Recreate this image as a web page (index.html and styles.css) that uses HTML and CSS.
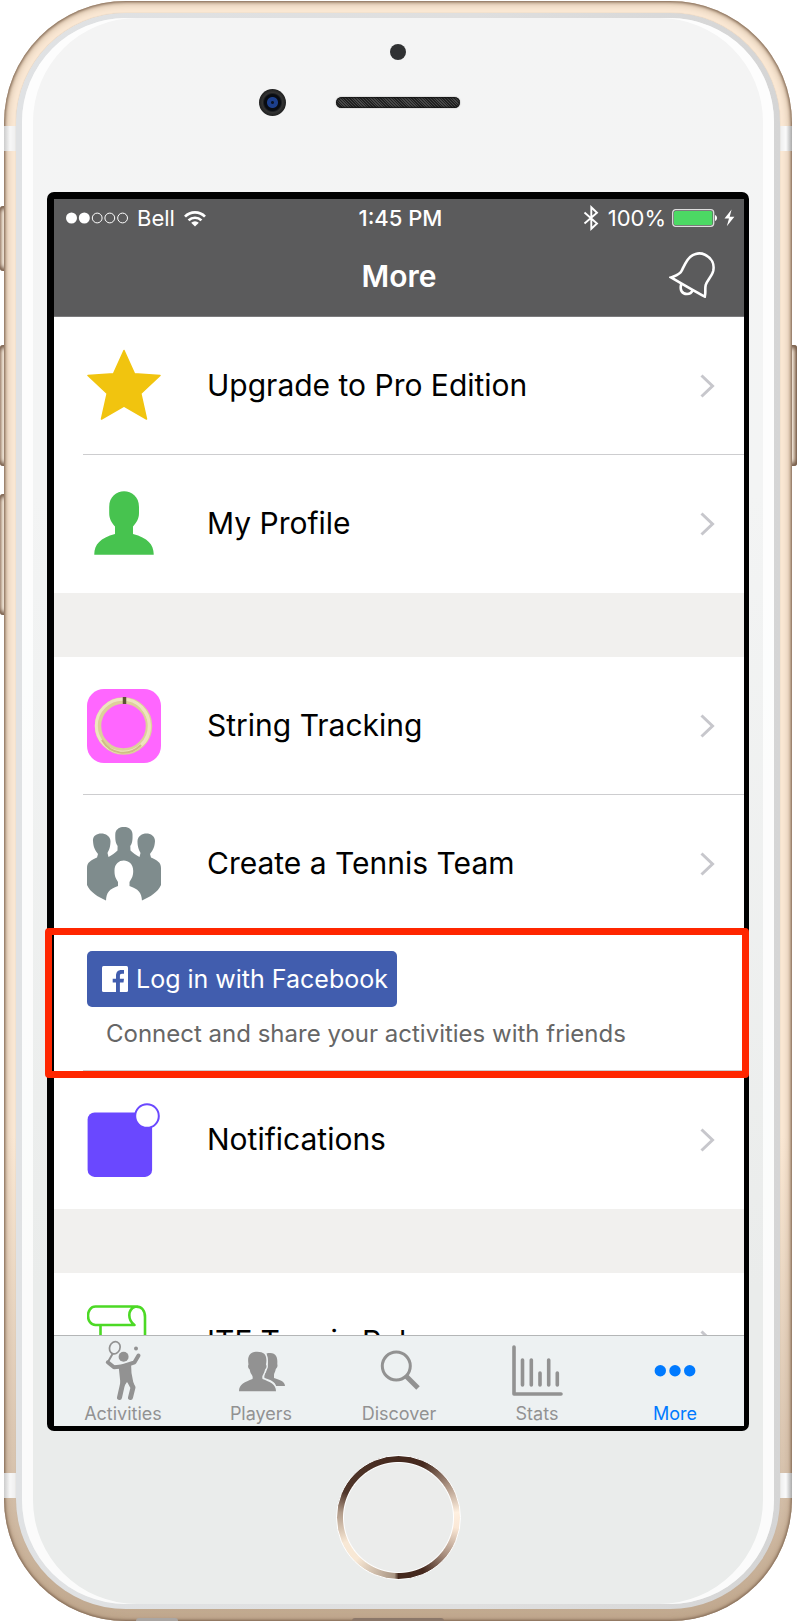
FILE: index.html
```html
<!DOCTYPE html>
<html lang="en">
<head>
<meta charset="utf-8">
<meta name="viewport" content="width=device-width, initial-scale=1">
<title>More</title>
<link rel="stylesheet" href="styles.css">
</head>
<body>
<div class="device">
  <span class="key key-mute"></span>
  <span class="key key-up"></span>
  <span class="key key-down"></span>
  <span class="key key-power"></span>
  <div class="frame">
    <span class="band band-top"></span>
    <span class="band band-bottom"></span>
    <span class="port port-jack"></span>
    <span class="port port-dock"></span>
    <div class="rim">
      <div class="face">
        <div class="sensors">
          <span class="proximity"></span>
          <span class="camera"></span>
          <span class="speaker"></span>
        </div>
        <div class="screen">
          <header class="top">
            <div class="status">
              <div class="status-left">
                <svg width="62" height="12" viewBox="0 0 62 12"><g fill="#fff"><circle cx="5.5" cy="6" r="5.5"/><circle cx="18.3" cy="6" r="5.5"/></g><g fill="none" stroke="#fff"><circle cx="31.2" cy="6" r="4.9"/><circle cx="43.8" cy="6" r="4.9"/><circle cx="56.6" cy="6" r="4.9"/></g></svg>
                <span>Bell</span>
                <svg width="22" height="17" viewBox="0 0 22 17"><g fill="none" stroke="#fff" stroke-width="2.7"><path d="M1 6.6A14 14 0 0 1 21 6.6"/><path d="M4.6 10.4A9 9 0 0 1 17.4 10.4"/></g><path d="M11 16.6L7.2 12.7A5.4 5.4 0 0 1 14.8 12.7Z" fill="#fff"/></svg>
              </div>
              <span class="clock">1:45 PM</span>
              <div class="status-right">
                <svg class="bluetooth" width="16" height="26" viewBox="0 0 16 26"><path d="M1.5 7.5L14 18.5L8.3 23.8V2.2L14 7.7L1.5 18.5" fill="none" stroke="#fff" stroke-width="1.9"/></svg>
                <span>100%</span>
                <svg width="46" height="18" viewBox="0 0 46 18"><rect x=".7" y=".7" width="41" height="16.6" rx="3" fill="none" stroke="#ddd" stroke-width="1.3"/><rect x="2" y="2" width="38.4" height="14" rx="1.5" fill="#4cd964"/><path d="M43 6C45.7 6.7 45.7 11.3 43 12Z" fill="#fff"/></svg>
                <svg width="11" height="18" viewBox="0 0 11 18"><path d="M7.6 .5L.5 9.6H5L2.8 17.3L10.4 7.7H5.7Z" fill="#fff"/></svg>
              </div>
            </div>
            <div class="nav">
              <h1>More</h1>
              <button class="bell" type="button" aria-label="Alerts">
                <svg width="46" height="48" viewBox="669 250 46 48"><g fill="none" stroke="#fff" stroke-width="2.6"><path d="M671 277.4C676 275.5 680 274.500 681.500 271C683.500 267 685 263.500 687.500 260C692 253.500 699 252 705 254.700C712 258 714.600 264.500 713.200 271C711.800 276.500 706.500 281 705.700 285C704.700 289.500 706 292 704.800 296.600Q694 291 671 277.400Z"/><path d="M681.200 284C679.500 290 682 294 687 294C689.800 294 691.700 292.600 692.600 290.300"/></g></svg>
              </button>
            </div>
          </header>
          <main class="list">
            <ul class="group">
              <li><a class="row" href="#pro">
                <svg class="icon" viewBox="87 348 74 74"><path d="M124 349.500L134.500 372.800L160 374.500L140.800 392.500L146.500 418L124 405L101.500 418L107.200 392.500L88 374.500L113.500 372.800Z" fill="#f1c40f" stroke="#f1c40f" stroke-width="1.500" stroke-linejoin="round"/></svg>
                <span class="label">Upgrade to Pro Edition</span>
                <svg class="chevron" viewBox="0 0 15 24"><path d="M1.500 1.500L12.500 12L1.500 22.500"/></svg>
              </a></li>
              <li><a class="row" href="#profile">
                <svg class="icon" viewBox="87 487 74 74"><path d="M94.300 554.700C94 545 100 538 115 534V526.500C111.500 522.500 109.200 519 109.200 513V507C109.200 486 139 486 139 507V513C139 519 136.500 522.500 133 526.500V534C148 538 154 545 153.700 554.700Z" fill="#47c34f"/></svg>
                <span class="label">My Profile</span>
                <svg class="chevron" viewBox="0 0 15 24"><path d="M1.500 1.500L12.500 12L1.500 22.500"/></svg>
              </a></li>
            </ul>
            <ul class="group">
              <li><a class="row" href="#strings">
                <svg class="icon" viewBox="0 0 74 74"><rect width="74" height="74" rx="17" fill="#ff66ff"/><g fill="none"><circle cx="36.500" cy="37" r="25.500" stroke="#ddd09b" stroke-width="6.500"/><circle cx="35.800" cy="36.800" r="26.500" stroke="#eee5c0" stroke-width="3"/><path d="M54 18C66 32 65 49 54 57" stroke="#efe2bd" stroke-width="2"/><path d="M15 51C24 66 42 68 54 56" stroke="#cfbf84" stroke-width="2"/><path d="M37.500 8V15" stroke="#5d5133" stroke-width="3.500"/></g></svg>
                <span class="label">String Tracking</span>
                <svg class="chevron" viewBox="0 0 15 24"><path d="M1.500 1.500L12.500 12L1.500 22.500"/></svg>
              </a></li>
              <li><a class="row" href="#team">
                <svg class="icon" viewBox="87 827 74 74"><path fill="#7f8c8d" d="M106 900.500C98 897 90 892 87 885V868C87 862 91 860.500 97 857.500L98 854C95 850 93.300 847 93 841C92 831 110 831 110.500 841C110.500 847 109 850 107.500 853L108.500 857C112 855 115 853 117.500 850.500L117.600 846C116 843.500 115 841 115.300 834C115.800 824.500 132 824.500 132.500 834C132.800 841 132 843.500 130.300 846L130.500 850.500C133 853 136 855 139.500 857L140.500 853C139 850 137.400 847 137.500 841C138 831 155 831 155 841C154.700 847 153 850 150 854L151 857.500C157 860.500 161 862 161 868V885C158 892 150 897 142 900.500Z"/><path d="M106 902C106 893 109 889 118 886V882C115.500 878 114.500 876 114.500 871C114 857 133.500 857 133.200 871C133.200 876 132 878 129.500 882V886C138.500 889 142 893 142 902Z" fill="#fff"/></svg>
                <span class="label">Create a Tennis Team</span>
                <svg class="chevron" viewBox="0 0 15 24"><path d="M1.500 1.500L12.500 12L1.500 22.500"/></svg>
              </a></li>
              <li class="connect">
                <button class="facebook" type="button">
                  <svg width="26" height="26" viewBox="0 0 26 26"><rect width="26" height="26" rx="1.500" fill="#fff"/><path d="M14 26V16.500H10.700V12.700H14V10C14 6 16 4 19.300 4H22V7.800H20C18.300 7.800 17.900 8.600 17.900 10V12.700H22L21.500 16.500H17.900V26Z" fill="#415dae"/></svg>
                  <span>Log in with Facebook</span>
                </button>
                <p>Connect and share your activities with friends</p>
              </li>
              <li><a class="row" href="#notifications">
                <svg class="icon" viewBox="87 1103 74 74"><rect x="87.600" y="1112.400" width="64.500" height="64.500" rx="7" fill="#6a48ff"/><circle cx="147" cy="1116" r="11.800" fill="#fff" stroke="#6a48ff" stroke-width="2"/></svg>
                <span class="label">Notifications</span>
                <svg class="chevron" viewBox="0 0 15 24"><path d="M1.500 1.500L12.500 12L1.500 22.500"/></svg>
              </a></li>
            </ul>
            <ul class="group group-cut">
              <li><a class="row" href="#rules">
                <svg class="icon" viewBox="87 1305 74 74"><g fill="none" stroke="#4cd925" stroke-width="2.600" stroke-linejoin="round"><path d="M138 1306.500H95.500C85.500 1306.500 85.500 1325 95.500 1325H134.500C127.500 1320 127.500 1309.500 135 1306.700C142 1305.800 145 1311 145 1317V1378H100.500V1325"/></g></svg>
                <span class="label">ITF Tennis Rules</span>
                <svg class="chevron" viewBox="0 0 15 24"><path d="M1.500 1.500L12.500 12L1.500 22.500"/></svg>
              </a></li>
            </ul>
          </main>
          <nav class="tabs">
            <a class="tab" href="#activities">
              <svg width="60" height="62" viewBox="92 1340 60 62"><g fill="none" stroke="#929292" stroke-linecap="round" stroke-linejoin="round"><ellipse cx="113.800" cy="1347.800" rx="5.200" ry="6.300" stroke-width="1.700" transform="rotate(22 113.800 1347.800)"/><path d="M111.500 1354L107.500 1361" stroke-width="2"/><path d="M106.800 1362.300L113 1367.300L121 1366.500L133.500 1362.300L137.500 1355.500" stroke-width="4"/><path d="M122 1382L118.500 1397.500M128 1380L132 1387.500L129.500 1397.500" stroke-width="5"/></g><g fill="#929292"><circle cx="122.600" cy="1356.700" r="5"/><circle cx="135" cy="1348.400" r="2"/><path d="M117.500 1365L130 1363L130.500 1373L133 1386L126 1382L122 1388L119.500 1384Z"/></g></svg>
              <span>Activities</span>
            </a>
            <a class="tab" href="#players">
              <svg width="60" height="62" viewBox="230 1340 60 62"><g fill="#929292"><path d="M265.500 1353.500C274 1351.500 277 1356 276.300 1364C277 1366 276 1368 274.800 1369C274.300 1372 273 1373 273 1375V1378C279 1380 284 1381.500 284 1386H275C274 1382 270 1380 263.500 1378C263 1376 263.500 1374 265 1372C267 1368 268 1360 265.500 1353.500Z"/><path stroke="#edf1f2" stroke-width="2.500" paint-order="stroke" d="M238 1391.200C238 1384 244 1382 251.500 1379C252.500 1375 249.500 1375 248.700 1369.500C247 1368.500 246.700 1366 247.500 1364.500C246 1356 249 1351.800 256.300 1351.800C264 1351.800 266.500 1356 265 1364.500C266 1366 265.500 1368.500 264 1369.500C263 1375 260.500 1375 261.500 1379C269 1382 275 1384 275 1391.200Z"/></g></svg>
              <span>Players</span>
            </a>
            <a class="tab" href="#discover">
              <svg width="60" height="62" viewBox="368 1340 60 62"><g fill="none" stroke="#929292"><circle cx="395.300" cy="1366" r="14" stroke-width="3"/><path d="M405 1376L417 1388" stroke-width="5"/></g></svg>
              <span>Discover</span>
            </a>
            <a class="tab" href="#stats">
              <svg width="60" height="62" viewBox="506 1340 60 62"><g fill="none" stroke="#929292" stroke-width="3.600" stroke-linecap="round" stroke-linejoin="round"><path d="M513 1347V1394H560"/><path d="M521.500 1360V1385M530.300 1360V1385M539 1373V1385M547.700 1360V1385M556.300 1373V1385"/></g></svg>
              <span>Stats</span>
            </a>
            <a class="tab tab-current" href="#more" aria-current="page">
              <svg width="60" height="62" viewBox="644 1340 60 62"><g fill="#007aff"><circle cx="659.300" cy="1370.700" r="5.700"/><circle cx="674" cy="1370.700" r="5.700"/><circle cx="688.700" cy="1370.700" r="5.700"/></g></svg>
              <span>More</span>
            </a>
          </nav>
        </div>
        <div class="chin"><button class="home" type="button" aria-label="Home"></button></div>
      </div>
    </div>
  </div>
</div>
</body>
</html>
```
FILE: styles.css
```css
* { box-sizing: border-box; }

body {
  margin: 0;
  background: #fff;
  font-family: Inter, "Liberation Sans", sans-serif;
  color: #000;
}

ul, h1, p { margin: 0; padding: 0; list-style: none; }
a { color: inherit; text-decoration: none; }
button { border: 0; padding: 0; font: inherit; background: none; cursor: pointer; }
svg { display: block; flex: none; }

/* Phone body */
.device { position: relative; padding: 1px 5px 1px 4px; }

.frame {
  position: relative;
  padding: 12px;
  border-radius: 122px;
  background: linear-gradient(#fae8d4, #fae8d4 70%, #d9c5b0 90%, #c0a88e);
  box-shadow: inset 0 0 3px 1px #7d6551, inset 0 0 8px 1px #b79c82;
}

.rim {
  position: relative;
  padding: 5px 6px;
  border-radius: 110px;
  background: linear-gradient(90deg, #e0e2e4, #dfdfdf 60%, #d5d5d5);
  box-shadow: 0 0 1px #bba997;
}

.face {
  border-radius: 104px;
  padding: 0 25px;
  background: linear-gradient(#f4f4f4, #f3f4f4 30%, #eaeceb 80%, #eaeceb);
  box-shadow: inset 11px 0 #fffc, inset -11px 0 #fffc;
}

.key {
  position: absolute;
  left: 0;
  width: 8px;
  height: 121px;
  border-radius: 3px;
  background: linear-gradient(90deg, #b79f8b, #eee3d5 40%, #b79f8b 75%, #7a6351);
  box-shadow: inset 0 5px 4px -2px #765c49, inset 0 -5px 4px -2px #765c49;
}
.key-mute { top: 206px; height: 65px; }
.key-up { top: 345px; }
.key-down { top: 494px; }
.key-power { top: 345px; left: auto; right: 0; }

.band {
  position: absolute;
  left: 0;
  right: 0;
  height: 25px;
  background: linear-gradient(90deg, #ccc, #f7f7f7 6px, #eee 12px, #eee calc(100% - 12px), #fafafa calc(100% - 6px), #aaa);
}
.band-top { top: 125px; }
.band-bottom { bottom: 123px; }

.port { position: absolute; bottom: 0; height: 3px; border-radius: 3px 3px 0 0; background: #8b7769; }
.port-jack { left: 132px; width: 42px; background: #aaa6a3; }
.port-dock { left: 50%; width: 92px; margin-left: -46px; }

.sensors {
  display: grid;
  grid-template-columns: 1fr 124px 1fr;
  column-gap: 50px;
  row-gap: 29px;
  align-items: center;
  justify-items: center;
  padding: 26px 0 76px;
}
.proximity { grid-column: 2; width: 16px; height: 16px; border-radius: 50%; background: #303133; }
.camera {
  grid-column: 1;
  justify-self: end;
  width: 27px;
  height: 27px;
  border-radius: 50%;
  background: radial-gradient(circle, #0b1428 0 1px, #1c3f8d 2px 5px, #090c12 6px 8px, #333 10px, #222 13px);
}
.speaker {
  grid-column: 2;
  width: 100%;
  height: 11px;
  border-radius: 6px;
  background: repeating-linear-gradient(45deg, #222 0 1px, #484848 1px 2px);
  box-shadow: inset 0 0 2px 1px #111, 0 0 1px 1px #ddd;
}

/* Screen */
.screen {
  border: solid #000;
  border-width: 7px 5px 5px 7px;
  border-radius: 7px;
  background: #fff;
}

.top { background: #5b5b5c; color: #fff; border-bottom: 1px solid #7b7b7d; }

.status {
  display: grid;
  grid-template-columns: 1fr auto 1fr;
  align-items: center;
  height: 38px;
  padding: 0 9px 0 12px;
  font-size: 22px;
}
.status-left, .status-right { display: flex; align-items: center; }
.status-left { gap: 9px; }
.status-right { justify-content: flex-end; gap: 6px; }
.bluetooth { margin-right: 3px; }
.clock { font-weight: 500; }

.nav { position: relative; display: flex; justify-content: center; align-items: center; height: 79px; padding-bottom: 2px; }
.nav h1 { font-size: 30px; line-height: 36px; font-weight: 600; }
.bell { position: absolute; right: 29px; top: 13px; }

.group + .group { border-top: 64px solid #f1f0ee; }
.group-cut { height: 126px; overflow: hidden; }

.row {
  display: flex;
  align-items: center;
  height: 138px;
  margin-left: 29px;
  padding: 0 29px 0 4px;
  border-bottom: 1px solid #cdcdcf;
}
li:last-child .row, li:has(+ .connect) .row { border-color: transparent; }
.icon { width: 74px; height: 74px; margin-right: 46px; }
.label { flex: 1; padding-bottom: 2px; font-size: 30px; line-height: 36px; white-space: nowrap; }
.chevron { width: 15px; height: 24px; fill: none; stroke: #c7c7cc; stroke-width: 3; }

.connect { position: relative; height: 138px; padding: 18px 33px 0; }
.connect::before {
  content: "";
  position: absolute;
  left: 29px;
  right: 0;
  bottom: 0;
  border-bottom: 1px solid #cdcdcf;
}
.connect::after {
  content: "";
  position: absolute;
  inset: -5px -5px -7px -9px;
  border: 7px solid #ff2600;
  border-radius: 4px;
  pointer-events: none;
}
.facebook {
  display: flex;
  align-items: center;
  gap: 8px;
  height: 56px;
  padding: 0 9px 0 15px;
  border-radius: 5px;
  background: #415dae;
  color: #fff;
  font-size: 25px;
}
.connect p { padding: 13px 0 0 19px; font-size: 24px; line-height: 28px; color: #666; white-space: nowrap; }

.tabs {
  display: flex;
  height: 91px;
  border-top: 1px solid #b4b6b7;
  background: #edf1f2;
  color: #929292;
}
.tab { flex: 1; display: flex; flex-direction: column; align-items: center; padding-top: 4px; font-size: 18px; line-height: 24px; }
.tab-current { color: #007aff; }

.chin { display: flex; justify-content: center; padding: 24px 0; }
.home {
  width: 125px;
  height: 125px;
  border: 1px solid #fff;
  border-radius: 50%;
  background:
    radial-gradient(circle, #ebeceb 54px, #fff 55px, transparent 56px),
    conic-gradient(#45291e, #45291e 25deg, #b59d8c 60deg, #fff0e0 85deg, #fbe8d6 100deg, #a58b7b 130deg, #45291e 155deg, #45291e 180deg, #a99583 184deg, #f8e8d5 225deg, #f8e8d5 245deg, #b09a88 275deg, #50362a 295deg, #45291e);
}
```
